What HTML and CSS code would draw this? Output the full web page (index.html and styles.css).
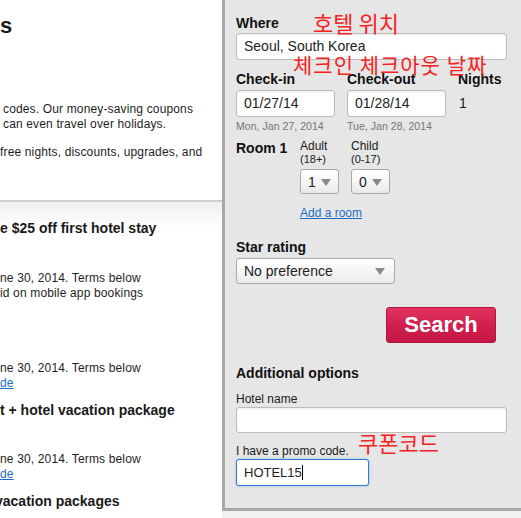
FILE: index.html
```
<!DOCTYPE html>
<html>
<head>
<meta charset="utf-8">
<link rel="stylesheet" href="styles.css">
</head>
<body>
<div class="page">
  <div class="left">
    <div class="intro">
      <div class="big-title">s</div>
      <p class="txt t1">codes. Our money-saving coupons<br>can even travel over holidays.</p>
      <p class="txt t2">free nights, discounts, upgrades, and</p>
    </div>
    <div class="offers">
      <div class="offer-title o1">e $25 off first hotel stay</div>
      <p class="txt o1-text">ne 30, 2014. Terms below<br>id on mobile app bookings</p>
      <p class="txt o2-text">ne 30, 2014. Terms below<br><a class="lnk" href="#">de</a></p>
      <div class="offer-title o3">t + hotel vacation package</div>
      <p class="txt o3-text">ne 30, 2014. Terms below<br><a class="lnk" href="#">de</a></p>
      <div class="offer-title o4"><span class="shift">vacation packages</span></div>
    </div>
  </div>
  <div class="panel">
    <div class="note note1">호텔 위치</div>
    <div class="note note2">체크인 체크아웃 날짜</div>
    <div class="note note3">쿠폰코드</div>

    <div class="lbl where">Where</div>
    <div class="input wide">Seoul, South Korea</div>

    <div class="dates">
      <div class="dcol">
        <div class="lbl">Check-in</div>
        <div class="input date">01/27/14</div>
        <div class="sub">Mon, Jan 27, 2014</div>
      </div>
      <div class="dcol">
        <div class="lbl">Check-out</div>
        <div class="input date">01/28/14</div>
        <div class="sub">Tue, Jan 28, 2014</div>
      </div>
      <div class="ncol">
        <div class="lbl">Nights</div>
        <div class="nights">1</div>
      </div>
    </div>

    <div class="room">
      <div class="lbl room-lbl">Room 1</div>
      <div class="occ">
        <div class="small">Adult</div>
        <div class="tiny">(18+)</div>
        <div class="sel num"><span>1</span><i class="arrow"></i></div>
      </div>
      <div class="occ">
        <div class="small">Child</div>
        <div class="tiny">(0-17)</div>
        <div class="sel num"><span>0</span><i class="arrow"></i></div>
      </div>
    </div>
    <a class="add" href="#">Add a room</a>

    <div class="lbl star">Star rating</div>
    <div class="sel pref"><span>No preference</span><i class="arrow"></i></div>

    <div class="btn-row"><button class="search">Search</button></div>

    <div class="lbl addl">Additional options</div>
    <div class="small hn">Hotel name</div>
    <div class="input wide hinput"></div>
    <div class="small promo-lbl">I have a promo code.</div>
    <div class="input promo">HOTEL15<span class="caret"></span></div>
  </div>
</div>
</body>
</html>
```
FILE: styles.css
```
* { box-sizing: border-box; }
html, body { margin: 0; padding: 0; }
body {
  font-family: "Liberation Sans", Arial, sans-serif;
  color: #1a1a1a;
  background: #f1f1f1;
  width: 521px;
  height: 518px;
  overflow: hidden;
}
.page { display: flex; align-items: flex-start; }

.left {
  width: 222px;
  height: 518px;
  background: #fff;
  overflow: hidden;
  flex: none;
}
.intro { height: 202px; border-bottom: 2px solid #cfcfcf; }
.big-title { font-size: 22px; font-weight: bold; line-height: 26px; padding-top: 13px; }
.txt { margin: 0; font-size: 12px; line-height: 15px; color: #1e1e1e; letter-spacing: 0.15px; white-space: nowrap; }
.t1 { margin-top: 63px; padding-left: 3px; }
.t2 { margin-top: 13px; }
.offers {
  background: linear-gradient(#efefef 0, #fafafa 18px, #fff 32px);
  height: 316px;
}
.offer-title { font-size: 14px; font-weight: bold; line-height: 17px; white-space: nowrap; }
.o1 { padding-top: 18px; }
.o1-text { margin-top: 34px; }
.o2-text { margin-top: 60px; }
.o3 { margin-top: 11px; }
.o3-text { margin-top: 33px; }
.o4 { margin-top: 11px; }
.shift { display: inline-block; margin-left: -5px; }
.lnk { color: #1a6ec8; text-decoration: underline; }

.panel {
  position: relative;
  width: 299px;
  height: 511px;
  flex: none;
  background: #e6e6e6;
  border-left: 3px solid #a8a8a8;
  border-bottom: 3px solid #a8a8a8;
  padding: 15px 0 0 11px;
}
.lbl { font-size: 14px; font-weight: bold; line-height: 17px; color: #111; }
.input {
  background: #fff;
  border: 1px solid #bcbcbc;
  border-radius: 3px;
  box-shadow: inset 0 1px 2px rgba(0,0,0,0.08);
  font-size: 14px;
  height: 27px;
  line-height: 25px;
  padding-left: 7px;
  color: #222;
}
.wide { width: 271px; margin-top: 1px; }
.dates { display: flex; margin-top: 11px; }
.dcol { width: 111px; }
.date { width: 99px; margin-top: 2px; }
.sub { font-size: 10.6px; color: #777; line-height: 12px; margin-top: 3px; white-space: nowrap; }
.nights { font-size: 14px; line-height: 25px; margin-top: 3px; padding-left: 1px; }

.room { display: flex; margin-top: 8px; }
.room-lbl { width: 64px; line-height: 17px; }
.occ { width: 51px; }
.small { font-size: 12px; line-height: 13px; color: #1a1a1a; }
.tiny { font-size: 11px; line-height: 12px; color: #1a1a1a; }
.sel {
  display: flex;
  align-items: center;
  background: linear-gradient(#fff, #f6f6f6 50%, #e9e9e9);
  border: 1px solid #a9a9a9;
  border-radius: 3px;
  font-size: 14px;
  color: #222;
  position: relative;
}
.num { width: 39px; height: 25px; margin-top: 4px; padding-left: 7px; }
.arrow {
  position: absolute;
  top: 9px;
  width: 0; height: 0;
  border-left: 5px solid transparent;
  border-right: 5px solid transparent;
  border-top: 7px solid #8a8a8a;
}
.num .arrow { left: 20px; }
.add {
  display: inline-block;
  margin: 12px 0 0 64px;
  font-size: 12px;
  line-height: 14px;
  color: #1a6ec8;
}
.star { margin-top: 18px; }
.pref { width: 159px; height: 26px; margin-top: 2px; padding-left: 7px; }
.pref .arrow { right: 9px; }
.btn-row { display: flex; justify-content: flex-end; width: 260px; margin-top: 23px; }
.search {
  width: 110px;
  height: 36px;
  border: 1px solid #b3173f;
  border-radius: 3px;
  background: linear-gradient(#e2325e, #cf1d4b 60%, #c51843);
  color: #fff;
  font-family: "Liberation Sans", Arial, sans-serif;
  font-weight: bold;
  font-size: 22px;
  padding: 0;
}
.addl { margin-top: 22px; }
.hn { margin-top: 11px; }
.hinput { height: 26px; margin-top: 1px; }
.promo-lbl { margin-top: 12px; }
.promo {
  width: 133px;
  height: 27px;
  margin-top: 1px;
  border: 1px solid #2d7fd6;
  box-shadow: 0 0 2px rgba(45,127,214,0.6);
  font-size: 13px;
}
.caret { display: inline-block; width: 1px; height: 15px; background: #000; vertical-align: -3px; }

.note {
  position: absolute;
  font-family: "Noto Sans CJK KR", sans-serif;
  color: #f52323;
  font-size: 22px;
  line-height: 1;
  white-space: nowrap;
}
.note1 { left: 88px; top: 11px; }
.note2 { left: 68px; top: 54px; font-size: 21px; letter-spacing: 1px; }
.note3 { left: 133px; top: 431px; }
```
